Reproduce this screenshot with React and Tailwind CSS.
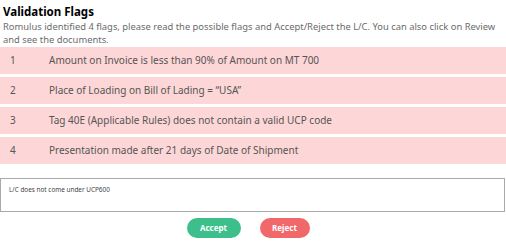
import React from 'react';

const flags = [
  'Amount on Invoice is less than 90% of Amount on MT 700',
  'Place of Loading on Bill of Lading = “USA”',
  'Tag 40E (Applicable Rules) does not contain a valid UCP code',
  'Presentation made after 21 days of Date of Shipment',
];

export default function App() {
  return (
    <div className="w-[506px] h-[242px] bg-white font-['Noto_Sans',sans-serif] overflow-hidden">
      <div className="px-[3px] pt-[3px]">
        <h2 className="text-[11.5px] font-bold text-black leading-[17px]">Validation Flags</h2>
        <p className="text-[9.4px] text-[#6b6b6b] leading-[13px]">
          Romulus identified 4 flags, please read the possible flags and Accept/Reject the L/C. You can also click on Review and see the documents.
        </p>
      </div>
      <div className="mt-[1px] flex flex-col gap-[3px]">
        {flags.map((f, i) => (
          <div key={i} className="h-[27px] bg-[#fdd7d7] flex items-center text-[10px] text-[#555]">
            <span className="w-[49px] pl-[10px]">{i + 1}</span>
            <span>{f}</span>
          </div>
        ))}
      </div>
      <div className="mt-[14px] h-[34px] border border-[#aaa] px-[8px] pt-[6px] text-[6.4px] text-[#444] mr-[1px]">
        L/C does not come under UCP600
      </div>
      <div className="mt-[6px] flex justify-center gap-[19px] pr-[10px]">
        <button className="w-[54px] h-[20px] rounded-full bg-[#3cbf8a] text-white text-[8px] font-bold">Accept</button>
        <button className="w-[50px] h-[20px] rounded-full bg-[#f0686a] text-white text-[8px] font-bold">Reject</button>
      </div>
    </div>
  );
}
